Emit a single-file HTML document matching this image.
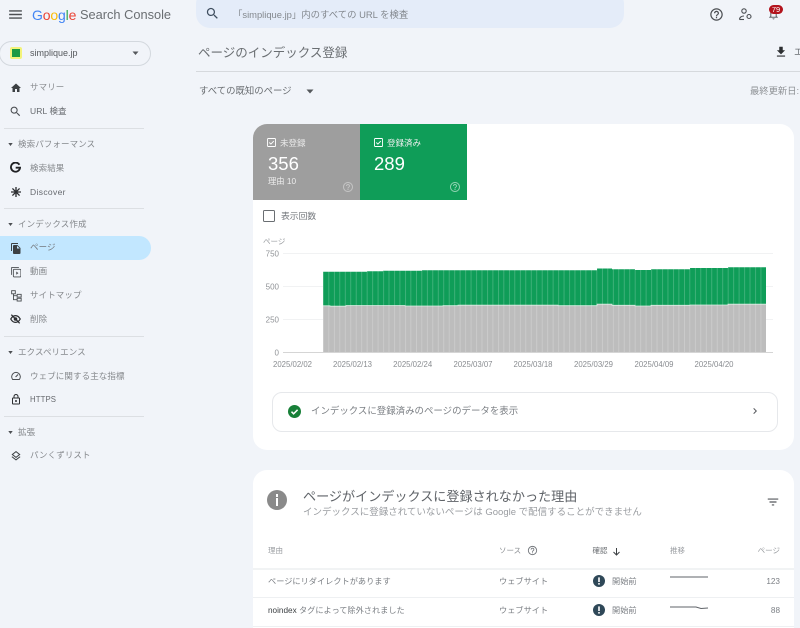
<!DOCTYPE html>
<html lang="ja"><head><meta charset="utf-8"><title>ページのインデックス登録</title>
<style>
html,body{margin:0;padding:0;width:800px;height:628px;overflow:hidden}
body{position:relative;background:#f1f4f9;font-family:"Liberation Sans","Noto Sans CJK JP",sans-serif;color:#5f6368}
.t{position:absolute;white-space:nowrap;line-height:14px;height:14px}
.s{font-size:8.2px;color:#7b7f84}
.n{font-size:8.5px;color:#66696e;letter-spacing:.1px}
.h{font-size:7.500px;color:#8a8d91}
.b{position:absolute}
.l{position:absolute;height:1px;background:#dcdfe3}
svg.i{position:absolute;fill:#3c4043}
.r{position:absolute;left:253px;width:541px;height:1px;background:#eef0f2}
.c{position:absolute;background:#fff;border-radius:14px}
</style></head><body>

<!-- top bar -->
<svg class="i" style="left:7px;top:6px;fill:#4c4f53" width="17" height="17" viewBox="0 0 24 24"><path d="M3 18h18v-2H3v2zm0-5h18v-2H3v2zm0-7v2h18V6H3z"/></svg>
<div class="t" style="left:32px;top:8px;font-size:14px;letter-spacing:-.15px"><span style="color:#4285f4">G</span><span style="color:#ea4335">o</span><span style="color:#fbbc05">o</span><span style="color:#4285f4">g</span><span style="color:#34a853">l</span><span style="color:#ea4335">e</span></div>
<div class="t" style="left:80px;top:8px;font-size:12.800px;color:#6a6e72">Search Console</div>
<div class="b" style="left:196px;top:-10px;width:428px;height:38px;background:#e4ecf9;border-radius:14px"></div>
<svg class="i" style="left:205px;top:6px;fill:#3f4e5f" width="15" height="15" viewBox="0 0 24 24"><path d="M15.500 14h-.79l-.28-.27C15.410 12.590 16 11.110 16 9.500 16 5.910 13.090 3 9.500 3S3 5.910 3 9.500 5.910 16 9.500 16c1.610 0 3.090-.59 4.230-1.570l.27.28v.79l5 4.990L20.490 19l-4.990-5zm-6 0C7.010 14 5 11.990 5 9.500S7.010 5 9.500 5 14 7.010 14 9.500 11.990 14 9.500 14z"/></svg>
<div class="t" style="left:233px;top:8px;font-size:9.400px;color:#83888e">「simplique.jp」内のすべての URL を検査</div>
<svg class="i" style="left:709px;top:7px;fill:#4c4f53" width="15" height="15" viewBox="0 0 24 24"><path d="M11 18h2v-2h-2v2zm1-16C6.480 2 2 6.480 2 12s4.480 10 10 10 10-4.480 10-10S17.520 2 12 2zm0 18c-4.410 0-8-3.590-8-8s3.590-8 8-8 8 3.590 8 8-3.590 8-8 8zm0-14c-2.210 0-4 1.790-4 4h2c0-1.100.900-2 2-2s2 .900 2 2c0 2-3 1.750-3 5h2c0-2.250 3-2.500 3-5 0-2.210-1.790-4-4-4z"/></svg>
<svg class="b" style="left:738px;top:8px" width="15" height="13" viewBox="0 0 15 13" fill="none" stroke="#4c4f53" stroke-width="1.100"><circle cx="6" cy="3" r="2.200"/><path d="M1.500 11.500c0-2.500 2.500-3.500 4.500-3.500"/><path d="M1.500 11.500h4.500"/><circle cx="11" cy="8.500" r="2"/></svg>
<svg class="i" style="left:767px;top:7px;fill:#66696e" width="13" height="14" viewBox="0 0 24 24"><path d="M12 22c1.100 0 2-.900 2-2h-4c0 1.100.900 2 2 2zm6-6v-5c0-3.070-1.630-5.640-4.500-6.320V4c0-.83-.67-1.500-1.500-1.500s-1.500.67-1.500 1.500v.68C7.640 5.360 6 7.920 6 11v5l-2 2v1h16v-1l-2-2zm-2 1H8v-6c0-2.480 1.510-4.500 4-4.500s4 2.020 4 4.500v6z"/></svg>
<div class="b" style="left:769px;top:4.500px;width:14px;height:9px;background:#b3141d;border-radius:5px;color:#fff;font-size:7.500px;line-height:9px;text-align:center">79</div>

<!-- sidebar -->
<div class="b" style="left:-1px;top:41px;width:150px;height:23px;border:1px solid #d3d8de;border-radius:13px"></div>
<div class="b" style="left:10px;top:47px;width:12px;height:12px;background:#f3f37a;border-radius:2px"></div>
<div class="b" style="left:12px;top:49px;width:8px;height:8px;background:#1c9a43"></div>
<div class="t" style="left:30px;top:46px;font-size:9px;color:#55585c">simplique.jp</div>
<svg class="b" style="left:132px;top:51px" width="7" height="5"><path d="M.5 .5h6L3.500 4z" fill="#55585c"/></svg>

<svg class="i" style="left:10px;top:82px" width="12" height="12" viewBox="0 0 24 24"><path d="M10 20v-6h4v6h5v-8h3L12 3 2 12h3v8z"/></svg>
<div class="t n" style="left:30px;top:80px;color:#8a8d91">サマリー</div>
<svg class="i" style="left:9px;top:105px;fill:#4c4f53" width="13" height="13" viewBox="0 0 24 24"><path d="M15.500 14h-.79l-.28-.27C15.410 12.590 16 11.110 16 9.500 16 5.910 13.090 3 9.500 3S3 5.910 3 9.500 5.910 16 9.500 16c1.610 0 3.090-.59 4.230-1.570l.27.28v.79l5 4.990L20.490 19l-4.990-5zm-6 0C7.010 14 5 11.990 5 9.500S7.010 5 9.500 5 14 7.010 14 9.500 11.990 14 9.500 14z"/></svg>
<div class="t n" style="left:30px;top:104px">URL 検査</div>
<div class="l" style="left:4px;top:128px;width:140px"></div>

<svg class="b" style="left:8px;top:143px" width="5" height="4"><path d="M.3 0h4.400L2.500 3z" fill="#4c4f53"/></svg>
<div class="t n" style="left:18px;top:137px;color:#85888c">検索パフォーマンス</div>
<svg class="b" style="left:10px;top:162px" width="11" height="11" viewBox="0 0 12 12" fill="none" stroke="#202124" stroke-width="2"><path d="M10.300 3A5 5 0 1 0 11 6.200H6.200"/></svg>
<div class="t n" style="left:30px;top:161px;color:#85888c">検索結果</div>
<svg class="b" style="left:11px;top:187px" width="10" height="10" viewBox="0 0 12 12" stroke="#2c2e31" stroke-width="1.600"><path d="M6 0v12M0 6h12M1.700 1.700l8.600 8.600M10.300 1.700l-8.600 8.600"/></svg>
<div class="t n" style="left:30px;top:185px;letter-spacing:.35px">Discover</div>
<div class="l" style="left:4px;top:208px;width:140px"></div>

<svg class="b" style="left:8px;top:223px" width="5" height="4"><path d="M.3 0h4.400L2.500 3z" fill="#4c4f53"/></svg>
<div class="t n" style="left:18px;top:217px;color:#85888c">インデックス作成</div>
<div class="b" style="left:-10px;top:236px;width:161px;height:24px;background:#c2e7ff;border-radius:0 12px 12px 0"></div>
<svg class="i" style="left:10px;top:242px" width="12" height="13" viewBox="0 0 24 24"><path d="M16 1H4c-1.100 0-2 .900-2 2v14h2V3h12V1zm-1 4l6 6v10c0 1.100-.900 2-2 2H7.990C6.890 23 6 22.100 6 21l.01-14c0-1.100.89-2 1.990-2h7zm-1 7h5.500L14 6.500V12z" fill-rule="evenodd"/></svg>
<div class="t n" style="left:30px;top:240px;color:#74787d">ページ</div>
<svg class="b" style="left:10.500px;top:267px" width="10.500" height="10.500" viewBox="0 0 12 12" fill="none" stroke="#4c4f53" stroke-width="1"><path d="M.7 9V.7H9"/><rect x="2.700" y="2.700" width="8.600" height="8.600" rx="1"/><path d="M6 5.200l2.500 1.800L6 8.800z" fill="#4c4f53" stroke="none"/></svg>
<div class="t n" style="left:30px;top:264px;color:#85888c">動画</div>
<svg class="b" style="left:10.500px;top:290px" width="11" height="12" viewBox="0 0 12 13" fill="none" stroke="#4c4f53" stroke-width="1"><rect x=".7" y=".7" width="4" height="3.400"/><rect x="6.700" y="4.700" width="4.400" height="3"/><rect x="6.700" y="9" width="4.400" height="3"/><path d="M2.700 4v6.500h4M2.700 6.200h4"/></svg>
<div class="t n" style="left:30px;top:288px;color:#85888c">サイトマップ</div>
<svg class="b" style="left:10px;top:314px" width="11" height="10" viewBox="0 0 13 12" fill="none" stroke="#2c2e31" stroke-width="1.500"><path d="M.8 6C2.500 3 4.500 1.900 6.500 1.900S10.500 3 12.200 6C10.500 9 8.500 10.100 6.500 10.100S2.500 9 .8 6z"/><circle cx="6.500" cy="6" r="1.400"/><path d="M1.500 .8l10 10.400"/></svg>
<div class="t n" style="left:30px;top:312px;color:#85888c">削除</div>
<div class="l" style="left:4px;top:336px;width:140px"></div>

<svg class="b" style="left:8px;top:351px" width="5" height="4"><path d="M.3 0h4.400L2.500 3z" fill="#4c4f53"/></svg>
<div class="t n" style="left:18px;top:345px;color:#85888c">エクスペリエンス</div>
<svg class="b" style="left:11px;top:371px" width="10" height="9.500" viewBox="0 0 12 11" fill="none" stroke="#4c4f53" stroke-width="1.200"><path d="M2 10A5.200 5.200 0 1 1 10 10Z"/><path d="M5.500 7l3-3" stroke-width="1.300"/></svg>
<div class="t n" style="left:30px;top:369px;color:#85888c">ウェブに関する主な指標</div>
<svg class="i" style="left:10px;top:393px;fill:#2c2e31" width="12" height="13" viewBox="0 0 24 24"><path d="M18 8h-1V6c0-2.760-2.240-5-5-5S7 3.240 7 6v2H6c-1.100 0-2 .900-2 2v10c0 1.100.900 2 2 2h12c1.100 0 2-.900 2-2V10c0-1.100-.900-2-2-2zM9 6c0-1.660 1.340-3 3-3s3 1.340 3 3v2H9V6zm9 14H6V10h12v10zm-6-3c1.100 0 2-.900 2-2s-.900-2-2-2-2 .900-2 2 .900 2 2 2z"/></svg>
<div class="t n" style="left:30px;top:392.500px;font-size:7.800px">HTTPS</div>
<div class="l" style="left:4px;top:416px;width:140px"></div>

<svg class="b" style="left:8px;top:431px" width="5" height="4"><path d="M.3 0h4.400L2.500 3z" fill="#4c4f53"/></svg>
<div class="t n" style="left:18px;top:425px;color:#85888c">拡張</div>
<svg class="i" style="left:10px;top:450px" width="12" height="12" viewBox="0 0 24 24"><path d="M11.990 18.540l-7.370-5.730L3 14.070l9 7 9-7-1.630-1.270-7.380 5.740zM12 16l7.360-5.730L21 9l-9-7-9 7 1.630 1.270L12 16zm0-11.470L17.740 9 12 13.470 6.260 9 12 4.530z"/></svg>
<div class="t n" style="left:30px;top:448px;color:#85888c">パンくずリスト</div>

<!-- page header -->
<div class="t" style="left:198px;top:46px;font-size:12.500px;color:#6a6e72">ページのインデックス登録</div>
<div class="b" style="left:196px;top:71px;width:604px;height:1px;background:#d6d9dd"></div>
<svg class="i" style="left:774px;top:45px;fill:#2c2e31" width="14" height="14" viewBox="0 0 24 24"><path d="M19 9h-4V3H9v6H5l7 7 7-7zM5 18v2h14v-2H5z"/></svg>
<div class="t" style="left:794px;top:45px;font-size:9px;color:#6a6e72">エ</div>
<div class="t" style="left:199px;top:84px;font-size:9.400px;color:#6a6e72">すべての既知のページ</div>
<svg class="b" style="left:306px;top:89px" width="8" height="5"><path d="M.5 .5h7L4 4.500z" fill="#55585c"/></svg>
<div class="t" style="left:750px;top:84px;font-size:9.300px;color:#909397">最終更新日:</div>

<!-- card 1 -->
<div class="c" style="left:253px;top:124px;width:541px;height:326px"></div>
<div class="b" style="left:253px;top:124px;width:107px;height:76px;background:#9e9e9e;border-top-left-radius:14px"></div>
<div class="b" style="left:360px;top:124px;width:107px;height:76px;background:#0f9d58"></div>
<svg class="b" style="left:267px;top:138px" width="9" height="9" viewBox="0 0 9 9" fill="none" stroke="#fff" stroke-width=".9"><rect x=".5" y=".5" width="8" height="8" rx=".8"/><path d="M2.300 4.500l1.600 1.600 2.900-3"/></svg>
<div class="t" style="left:280px;top:136px;font-size:8.500px;color:#ececec">未登録</div>
<div class="t" style="left:268px;top:154px;height:20px;line-height:20px;font-size:18.500px;color:#fff">356</div>
<div class="t" style="left:268px;top:174px;font-size:8.300px;color:#ececec">理由 10</div>
<svg class="i" style="left:342px;top:181px;fill:#c4c4c4" width="12" height="12" viewBox="0 0 24 24"><path d="M11 18h2v-2h-2v2zm1-16C6.480 2 2 6.480 2 12s4.480 10 10 10 10-4.480 10-10S17.520 2 12 2zm0 18c-4.410 0-8-3.590-8-8s3.590-8 8-8 8 3.590 8 8-3.590 8-8 8zm0-14c-2.210 0-4 1.790-4 4h2c0-1.100.900-2 2-2s2 .900 2 2c0 2-3 1.750-3 5h2c0-2.250 3-2.500 3-5 0-2.210-1.790-4-4-4z"/></svg>
<svg class="b" style="left:374px;top:138px" width="9" height="9" viewBox="0 0 9 9" fill="none" stroke="#fff" stroke-width=".9"><rect x=".5" y=".5" width="8" height="8" rx=".8"/><path d="M2.300 4.500l1.600 1.600 2.900-3"/></svg>
<div class="t" style="left:387px;top:136px;font-size:8.500px;color:#f0f0f0">登録済み</div>
<div class="t" style="left:374px;top:154px;height:20px;line-height:20px;font-size:18.500px;color:#fff">289</div>
<svg class="i" style="left:449px;top:181px;fill:#8fd2b0" width="12" height="12" viewBox="0 0 24 24"><path d="M11 18h2v-2h-2v2zm1-16C6.480 2 2 6.480 2 12s4.480 10 10 10 10-4.480 10-10S17.520 2 12 2zm0 18c-4.410 0-8-3.590-8-8s3.590-8 8-8 8 3.590 8 8-3.590 8-8 8zm0-14c-2.210 0-4 1.790-4 4h2c0-1.100.900-2 2-2s2 .900 2 2c0 2-3 1.750-3 5h2c0-2.250 3-2.500 3-5 0-2.210-1.790-4-4-4z"/></svg>
<div class="b" style="left:263px;top:210px;width:10px;height:10px;border:1px solid #6a6e72;border-radius:1.500px"></div>
<div class="t" style="left:281px;top:209px;font-size:8.800px;color:#74787d">表示回数</div>
<div class="t" style="left:263px;top:235px;font-size:7.500px;color:#9a9da1">ページ</div>

<!-- chart -->
<svg class="b" style="left:253px;top:245px" width="541" height="130" viewBox="253 245 541 130">
<defs><pattern id="p" x="323" y="0" width="5.470" height="10" patternUnits="userSpaceOnUse"><rect x="0" y="0" width=".7" height="10" fill="#fff" fill-opacity=".28"/></pattern></defs>
<g stroke="#f1f2f3" stroke-width="1"><path d="M283 253.500H773M283 286.500H773M283 319.500H773"/></g>
<path d="M283 352.500H773" stroke="#d5d5d5"/>
<path fill="#0f9d58" d="M323 271.700H367V271.200H383V270.700H422V270.300H597V268.500H612V269.300H635V270H651V269.300H690V268H728V267.300H766V306H323Z"/>
<path fill="#bdbdbd" d="M323 305.800H330V306.200H346V305.500H405V306H443V305.700H458V305.200H558V305.700H597V304.200H612V305.300H635V306H651V305.300H690V305H728V304.200H766V352H323Z"/>
<path fill="none" stroke="#d9eee2" stroke-width=".8" d="M323 305.800H330V306.200H346V305.500H405V306H443V305.700H458V305.200H558V305.700H597V304.200H612V305.300H635V306H651V305.300H690V305H728V304.200H766"/>
<rect x="323" y="267" width="443" height="85" fill="url(#p)"/>
<g font-size="8" fill="#909397" text-anchor="end"><text x="279" y="256.500">750</text><text x="279" y="289.500">500</text><text x="279" y="322.500">250</text><text x="279" y="355.500">0</text></g>
<g font-size="7.800" fill="#8a8d91" text-anchor="middle"><text x="292.500" y="367">2025/02/02</text><text x="352.500" y="367">2025/02/13</text><text x="412.700" y="367">2025/02/24</text><text x="473" y="367">2025/03/07</text><text x="533" y="367">2025/03/18</text><text x="593.500" y="367">2025/03/29</text><text x="654" y="367">2025/04/09</text><text x="714" y="367">2025/04/20</text></g>
</svg>

<!-- link box -->
<div class="b" style="left:272px;top:392px;width:504px;height:38px;border:1px solid #e6e8eb;border-radius:10px"></div>
<svg class="b" style="left:288px;top:405px" width="13" height="13" viewBox="0 0 13 13"><circle cx="6.500" cy="6.500" r="6.500" fill="#188038"/><path d="M3.500 6.700l2.100 2.100 4-4" fill="none" stroke="#fff" stroke-width="1.500"/></svg>
<div class="t" style="left:311px;top:405px;font-size:9.450px;color:#7b7f84">インデックスに登録済みのページのデータを表示</div>
<svg class="i" style="left:749px;top:405px;fill:#55585c" width="12" height="12" viewBox="0 0 24 24"><path d="M10 6L8.590 7.410 13.170 12l-4.580 4.590L10 18l6-6z"/></svg>

<!-- card 2 -->
<div class="c" style="left:253px;top:470px;width:541px;height:158px;border-radius:14px 14px 0 0"></div>
<div class="b" style="left:267px;top:490px;width:20px;height:20px;border-radius:50%;background:#8a8a8a"></div>
<div class="b" style="left:276px;top:494px;width:2px;height:2.500px;background:#fff"></div>
<div class="b" style="left:276px;top:498px;width:2px;height:7.500px;background:#fff"></div>
<div class="t" style="left:303px;top:489px;font-size:13.100px;height:16px;line-height:16px;color:#5f6368">ページがインデックスに登録されなかった理由</div>
<div class="t" style="left:303px;top:506px;font-size:9.500px;color:#9a9da1">インデックスに登録されていないページは Google で配信することができません</div>
<svg class="i" style="left:766px;top:495px;fill:#55585c" width="14" height="14" viewBox="0 0 24 24"><path d="M10 18h4v-2h-4v2zM3 6v2h18V6H3zm3 7h12v-2H6v2z"/></svg>

<div class="t h" style="left:268px;top:544px;color:#9a9da1">理由</div>
<div class="t h" style="left:499px;top:544px">ソース</div>
<svg class="i" style="left:527px;top:545px;fill:#74787d" width="11" height="11" viewBox="0 0 24 24"><path d="M11 18h2v-2h-2v2zm1-16C6.480 2 2 6.480 2 12s4.480 10 10 10 10-4.480 10-10S17.520 2 12 2zm0 18c-4.410 0-8-3.590-8-8s3.590-8 8-8 8 3.590 8 8-3.590 8-8 8zm0-14c-2.210 0-4 1.790-4 4h2c0-1.100.900-2 2-2s2 .900 2 2c0 2-3 1.750-3 5h2c0-2.250 3-2.500 3-5 0-2.210-1.790-4-4-4z"/></svg>
<div class="t h" style="left:592.500px;top:544px;color:#6a6e72">確認</div>
<svg class="b" style="left:612px;top:547px" width="9" height="9" viewBox="0 0 9 9" fill="none" stroke="#3c4043" stroke-width="1"><path d="M4.500 1v7M1.500 5l3 3 3-3"/></svg>
<div class="t h" style="left:670px;top:544px;color:#9a9da1">推移</div>
<div class="t h" style="right:20px;top:544px;color:#9a9da1">ページ</div>

<div class="r" style="top:567.500px;height:2px;background:#f1f3f4"></div>
<div class="t s" style="left:268px;top:575px">ページにリダイレクトがあります</div>
<div class="t s" style="left:499px;top:575px">ウェブサイト</div>
<svg class="b" style="left:593px;top:575px" width="12" height="12" viewBox="0 0 12 12"><circle cx="6" cy="6" r="6" fill="#2f4858"/><rect x="5.200" y="2.400" width="1.600" height="4.600" fill="#fff"/><rect x="5.200" y="8" width="1.600" height="1.600" fill="#fff"/></svg>
<div class="t s" style="left:612px;top:575px">開始前</div>
<svg class="b" style="left:669px;top:572px" width="40" height="10"><path d="M1 5H39" stroke="#5f6368" fill="none"/></svg>
<div class="t s" style="right:20px;top:575px">123</div>
<div class="r" style="top:597px"></div>
<div class="t s" style="left:268px;top:604px"><span style="color:#3c4043">noindex</span> タグによって除外されました</div>
<div class="t s" style="left:499px;top:604px">ウェブサイト</div>
<svg class="b" style="left:593px;top:604px" width="12" height="12" viewBox="0 0 12 12"><circle cx="6" cy="6" r="6" fill="#2f4858"/><rect x="5.200" y="2.400" width="1.600" height="4.600" fill="#fff"/><rect x="5.200" y="8" width="1.600" height="1.600" fill="#fff"/></svg>
<div class="t s" style="left:612px;top:604px">開始前</div>
<svg class="b" style="left:669px;top:602px" width="40" height="10"><path d="M1 5H27L32 6.500L39 6" stroke="#5f6368" fill="none"/></svg>
<div class="t s" style="right:20px;top:604px">88</div>
<div class="r" style="top:626px"></div>
</body></html>
